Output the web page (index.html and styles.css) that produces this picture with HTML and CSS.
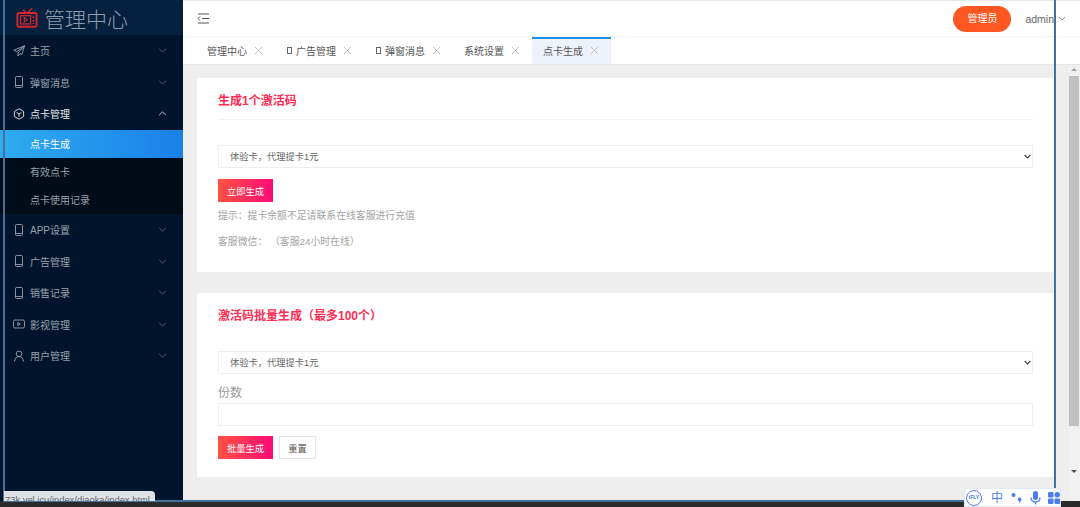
FILE: index.html
```html
<!DOCTYPE html>
<html lang="zh-CN">
<head>
    <meta charset="UTF-8">
    <meta name="viewport" content="width=device-width, initial-scale=1.0">
    <title>管理中心</title>
    <link rel="stylesheet" href="styles.css">
</head>
<body>
    <div class="window">
        <aside class="sidebar">
            <div class="logo">
                <svg class="logo-icon" width="22" height="22" viewBox="0 0 24 24" fill="none" stroke="#d6262b">
                    <path d="M11 6 7.500 3M13 6l5-5" stroke-width="1.300"/>
                    <rect x="1.500" y="6.500" width="21" height="15" rx="2" stroke-width="2"/>
                    <rect x="5" y="9.500" width="11" height="9" stroke-width="1.300"/>
                    <path d="M9 11.500v5l3.500-2.500z" stroke-width="1.100"/>
                    <path d="M19 10v2M19 14v2M19 17.500v1" stroke-width="2"/>
                </svg>
                <span class="logo-text">管理中心</span>
            </div>
            <nav class="menu">
                <div class="menu-item">
                    <svg class="menu-icon" viewBox="0 0 12 12"><path d="M11.500 .8 .8 5.200l3 1.500L11.500 .8 5 8v3l1.800-2.300 2 1z"/></svg>
                    <span>主页</span>
                    <svg class="chevron" viewBox="0 0 10 6"><path d="m1 1 4 4 4-4"/></svg>
                </div>
                <div class="menu-item">
                    <svg class="menu-icon" viewBox="0 0 12 12"><rect x="2.500" y=".5" width="7" height="11" rx="1"/><path d="M2.500 9.500h7"/></svg>
                    <span>弹窗消息</span>
                    <svg class="chevron" viewBox="0 0 10 6"><path d="m1 1 4 4 4-4"/></svg>
                </div>
                <div class="menu-item open">
                    <svg class="menu-icon" viewBox="0 0 12 12"><path d="m6 .8 4.600 2.600v5.200L6 11.200 1.400 8.600V3.400z"/><path d="M3.600 4.500 6 6l2.400-1.500M6 6v2.800"/></svg>
                    <span>点卡管理</span>
                    <svg class="chevron" viewBox="0 0 10 6"><path d="m1 5 4-4 4 4"/></svg>
                </div>
                <div class="submenu">
                    <div class="sub-item active">点卡生成</div>
                    <div class="sub-item">有效点卡</div>
                    <div class="sub-item">点卡使用记录</div>
                </div>
                <div class="menu-item">
                    <svg class="menu-icon" viewBox="0 0 12 12"><rect x="2.500" y=".5" width="7" height="11" rx="1"/><path d="M2.500 9.500h7"/></svg>
                    <span>APP设置</span>
                    <svg class="chevron" viewBox="0 0 10 6"><path d="m1 1 4 4 4-4"/></svg>
                </div>
                <div class="menu-item">
                    <svg class="menu-icon" viewBox="0 0 12 12"><rect x="2.500" y=".5" width="7" height="11" rx="1"/><path d="M2.500 9.500h7"/></svg>
                    <span>广告管理</span>
                    <svg class="chevron" viewBox="0 0 10 6"><path d="m1 1 4 4 4-4"/></svg>
                </div>
                <div class="menu-item">
                    <svg class="menu-icon" viewBox="0 0 12 12"><rect x="2.500" y=".5" width="7" height="11" rx="1"/><path d="M2.500 9.500h7"/></svg>
                    <span>销售记录</span>
                    <svg class="chevron" viewBox="0 0 10 6"><path d="m1 1 4 4 4-4"/></svg>
                </div>
                <div class="menu-item">
                    <svg class="menu-icon" viewBox="0 0 12 12"><rect x=".5" y="2" width="11" height="8" rx="1.500"/><path d="M4.800 4.500v3L7.300 6z"/></svg>
                    <span>影视管理</span>
                    <svg class="chevron" viewBox="0 0 10 6"><path d="m1 1 4 4 4-4"/></svg>
                </div>
                <div class="menu-item">
                    <svg class="menu-icon" viewBox="0 0 12 12"><circle cx="6" cy="3.800" r="2.800"/><path d="M1.500 11.500c.3-3 1.800-4.900 4.500-4.900s4.200 1.900 4.500 4.900"/></svg>
                    <span>用户管理</span>
                    <svg class="chevron" viewBox="0 0 10 6"><path d="m1 1 4 4 4-4"/></svg>
                </div>
            </nav>
        </aside>

        <div class="main">
            <header class="topbar">
                <svg class="fold-icon" width="13" height="11" viewBox="0 0 13 11" fill="none" stroke="#555">
                    <path d="M1 1h11M5 5.500h7M1 10h11M3 3.500 1 5.500l2 2"/>
                </svg>
                <div class="topbar-right">
                    <span class="role-pill">管理员</span>
                    <span class="user-name">admin</span>
                    <svg class="user-arrow" width="8" height="5" viewBox="0 0 10 6" fill="none" stroke="#777"><path d="m1 1 4 4 4-4"/></svg>
                </div>
            </header>
            <div class="tabs">
                <div class="tab">管理中心<svg class="tab-close" viewBox="0 0 9 9"><path d="m1 1 7 7M8 1 1 8"/></svg></div>
                <div class="tab"><i class="tofu"></i>广告管理<svg class="tab-close" viewBox="0 0 9 9"><path d="m1 1 7 7M8 1 1 8"/></svg></div>
                <div class="tab"><i class="tofu"></i>弹窗消息<svg class="tab-close" viewBox="0 0 9 9"><path d="m1 1 7 7M8 1 1 8"/></svg></div>
                <div class="tab">系统设置<svg class="tab-close" viewBox="0 0 9 9"><path d="m1 1 7 7M8 1 1 8"/></svg></div>
                <div class="tab current">点卡生成<svg class="tab-close" viewBox="0 0 9 9"><path d="m1 1 7 7M8 1 1 8"/></svg></div>
            </div>
            <div class="body">
                <div class="content">
                    <section class="card">
                        <h3 class="card-title ruled">生成1个激活码</h3>
                        <select class="field first-field">
                            <option>体验卡，代理提卡1元</option>
                        </select>
                        <div class="actions">
                            <button class="btn btn-primary">立即生成</button>
                        </div>
                        <p class="hint">提示：提卡余额不足请联系在线客服进行充值</p>
                        <p class="hint wechat">客服微信： （客服24小时在线）</p>
                    </section>
                    <section class="card batch">
                        <h3 class="card-title">激活码批量生成（最多100个）</h3>
                        <select class="field batch-field">
                            <option>体验卡，代理提卡1元</option>
                        </select>
                        <label class="field-label" for="copies">份数</label>
                        <input class="field" id="copies" type="text">
                        <div class="actions">
                            <button class="btn btn-primary">批量生成</button>
                            <button class="btn btn-plain">重置</button>
                        </div>
                    </section>
                </div>
                <div class="scrollbar">
                    <i class="arrow-up"></i>
                    <div class="thumb"></div>
                    <i class="arrow-down"></i>
                </div>
            </div>
        </div>
    </div>
    <div class="taskbar"></div>

    <!-- desktop window frame and things lying over the page -->
    <div class="frame"></div>
    <div class="status-url">73k.vel.icu/index/diaoka/index.html</div>
    <div class="ime-bar">
        <span class="ime-logo">iFLY</span>
        <span class="ime-lang">中</span>
        <svg width="13" height="13" viewBox="0 0 13 13" fill="#4d7ef0"><circle cx="3.500" cy="4" r="2"/><path d="M9.500 6.500a2 2 0 0 1 1.600 3.200L9 12.500l.3-2.100a2 2 0 0 1 .2-3.900z"/></svg>
        <svg width="11" height="14" viewBox="0 0 11 14" fill="#4d7ef0"><rect x="3" y="0" width="5" height="9" rx="2.500"/><path d="M1 6.500c0 3 2 4.500 4.500 4.500S10 9.500 10 6.500M5.500 11v2.500" fill="none" stroke="#4d7ef0" stroke-width="1.300"/></svg>
        <svg width="12" height="12" viewBox="0 0 12 12" fill="#4d7ef0"><rect width="5.500" height="5.500" rx="1"/><rect x="6.500" width="5.500" height="5.500" rx="2.700"/><rect y="6.500" width="5.500" height="5.500" rx="1"/><rect x="6.500" y="6.500" width="5.500" height="5.500" rx="1"/></svg>
    </div>
</body>
</html>
```

FILE: styles.css
```css
* {
    box-sizing: border-box;
}
html, body {
    margin: 0;
    height: 507px;
    overflow: hidden;
}
body {
    font-family: "Liberation Sans", "Noto Sans CJK SC", sans-serif;
    font-size: 10px;
    color: #555;
    background: #2b2b2b;
}
.window {
    display: flex;
    height: 501px;
    background: #f1f1f1;
}
.taskbar {
    height: 6px;
    background: #2b2b2b;
}

/* sidebar */
.sidebar {
    width: 183px;
    flex-shrink: 0;
    background: #00152b;
    color: #98a2ad;
}
.logo {
    display: flex;
    align-items: center;
    gap: 6px;
    height: 35px;
    padding-left: 16px;
    background: #06213f;
}
.logo-text {
    font-size: 21px;
    font-weight: 300;
    color: #8f9cab;
}
.menu-item {
    display: flex;
    align-items: center;
    height: 31.6px;
    padding: 0 16px 0 13px;
}
.menu-item span {
    flex: 1;
    margin-left: 5px;
}
.menu-item.open {
    color: #e4e8ec;
}
.menu-icon {
    width: 12px;
    height: 12px;
    fill: none;
    stroke: currentColor;
    stroke-width: 0.9;
    overflow: visible;
}
.chevron {
    width: 9px;
    height: 5px;
    fill: none;
    stroke: #5d6b7b;
}
.open .chevron {
    stroke: #e4e8ec;
}
.submenu {
    background: #000c17;
}
.sub-item {
    height: 28px;
    line-height: 29px;
    padding-left: 30px;
}
.sub-item.active {
    color: #fff;
    background: linear-gradient(90deg, #2fabf0, #1a80e8);
}

/* top bar and tabs */
.main {
    flex: 1;
    display: flex;
    flex-direction: column;
    min-width: 0;
}
.topbar {
    display: flex;
    align-items: center;
    justify-content: space-between;
    height: 37px;
    padding: 0 14px 0 14px;
    background: #fff;
    border-top: 1px solid #e8e8e8;
    border-bottom: 1px solid #f3f3f3;
}
.topbar-right {
    display: flex;
    align-items: center;
}
.role-pill {
    width: 58px;
    height: 26px;
    margin-right: 14px;
    line-height: 26px;
    text-align: center;
    color: #fff;
    border-radius: 13px;
    background: #ff5722;
}
.user-name {
    font-size: 10.500px;
    color: #666;
}
.user-arrow {
    margin-left: 4px;
}
.tabs {
    display: flex;
    height: 28px;
    padding-left: 13px;
    background: #fff;
    border-bottom: 1px solid #e6e6e6;
}
.tab {
    display: flex;
    align-items: center;
    height: 27px;
    padding: 0 12px 1px 11px;
    color: #555;
}
.tab.current {
    background: #eef3fb;
    box-shadow: inset 0 2px 0 #1e90e8;
}
.tab-close {
    width: 9px;
    height: 9px;
    margin-left: 7px;
    fill: none;
    stroke: #b5b5b5;
    stroke-width: 0.8;
}
.tofu {
    width: 5px;
    height: 7px;
    margin-right: 4px;
    margin-left: 1px;
    border: 1px solid #666;
}

/* page body */
.body {
    flex: 1;
    display: flex;
    min-height: 0;
}
.content {
    flex: 1;
    padding: 13px 15px 0 14px;
    background: #eeeeee;
}
.card {
    height: 194px;
    padding: 15px 21px 0;
    background: #fff;
}
.card.batch {
    height: 184px;
    margin-top: 21px;
    padding-top: 15px;
}
.card-title {
    margin: 0;
    font-size: 12px;
    line-height: 16px;
    font-weight: bold;
    color: #ff2d55;
}
.card-title.ruled {
    padding-bottom: 10px;
    border-bottom: 1px solid #f2f2f2;
    box-sizing: content-box;
}
.field {
    display: block;
    width: 100%;
    height: 23px;
    padding: 0 0 0 11px;
    font-family: inherit;
    font-size: 9.250px;
    color: #666;
    background: #fff;
    border: 1px solid #eeeeee;
    outline: none;
}
select.field {
    appearance: none;
    background: #fff url("data:image/svg+xml,%3Csvg xmlns='http://www.w3.org/2000/svg' width='7' height='5' viewBox='0 0 7 5'%3E%3Cpath d='m.7 1 2.800 2.800L6.300 1' fill='none' stroke='%23444' stroke-width='1.200'/%3E%3C/svg%3E") no-repeat right 1px center;
}
.first-field {
    margin-top: 25px;
}
.batch-field {
    margin-top: 27px;
}
.field-label {
    display: block;
    margin: 10px 0 1px;
    font-size: 12px;
    line-height: 18px;
    color: #999;
}
.actions {
    display: flex;
    gap: 6px;
    margin-top: 11px;
}
.batch .actions {
    margin-top: 10px;
}
.btn {
    height: 23px;
    padding: 0;
    font-family: inherit;
    font-size: 9.250px;
    cursor: pointer;
}
.btn-primary {
    width: 55px;
    color: #fff;
    border: none;
    background: linear-gradient(90deg, #ff5340, #ff0a78);
}
.btn-plain {
    width: 37px;
    color: #555;
    background: #fff;
    border: 1px solid #e6e6e6;
}
.hint {
    margin: 7px 0 0;
    font-size: 9.850px;
    line-height: 14px;
    color: #a3a3a3;
}
.hint.wechat {
    margin-top: 12px;
}

/* scrollbar */
.scrollbar {
    position: relative;
    width: 11px;
    padding-top: 11px;
    background: #f1f1f1;
}
.thumb {
    width: 10px;
    height: 350px;
    background: #c1c1c1;
}
.arrow-up, .arrow-down {
    position: absolute;
    left: 2px;
    width: 0;
    height: 0;
    border-left: 3px solid transparent;
    border-right: 3px solid transparent;
}
.arrow-up {
    top: 3px;
    border-bottom: 3px solid #a3a3a3;
}
.arrow-down {
    top: 405px;
    border-top: 3px solid #505050;
}

/* overlays */
.frame {
    position: absolute;
    left: 3px;
    top: 0;
    width: 1053px;
    height: 502px;
    border: 2px solid #44709c;
    border-top: none;
    pointer-events: none;
}
.status-url {
    position: absolute;
    left: 4px;
    top: 491px;
    width: 151px;
    height: 10px;
    overflow: hidden;
    padding-left: 1px;
    font-size: 9.400px;
    line-height: 17px;
    white-space: nowrap;
    color: #666;
    background: #dee1e6;
    border-top-right-radius: 4px;
}
.ime-bar {
    position: absolute;
    left: 964px;
    top: 488px;
    display: flex;
    align-items: center;
    gap: 7px;
    width: 97px;
    height: 19px;
    padding-left: 1px;
    background: #fff;
    border: 1px solid #e4e8f0;
}
.ime-logo {
    width: 16px;
    height: 16px;
    margin-right: 2px;
    font-size: 5px;
    font-weight: bold;
    line-height: 13px;
    text-align: center;
    color: #3d6fe0;
    border: 1.500px solid #4d7ef0;
    border-radius: 50%;
}
.ime-lang {
    font-size: 12px;
    line-height: 14px;
    color: #4d7ef0;
}
```
